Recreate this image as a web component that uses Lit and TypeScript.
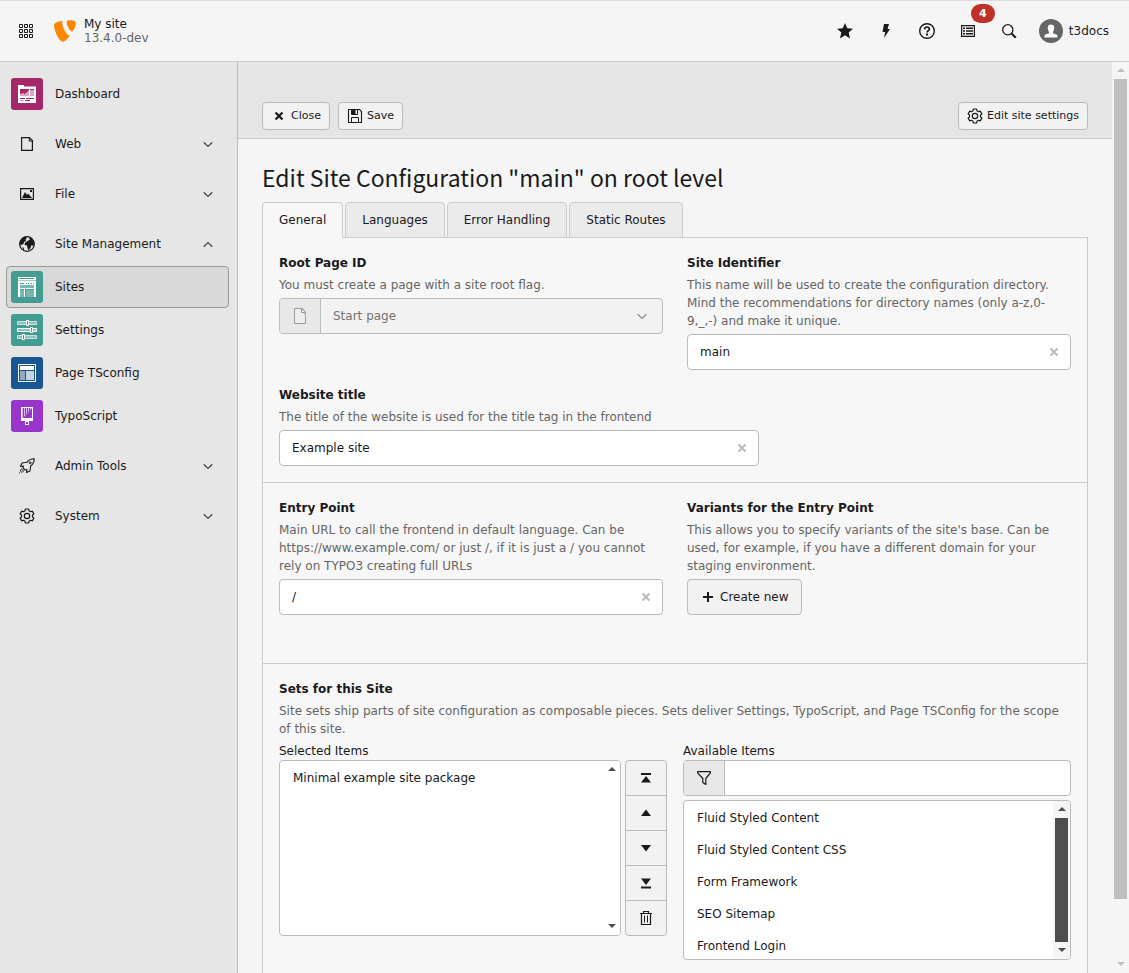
import { LitElement, html, css, svg, nothing, SVGTemplateResult } from "lit";
import { customElement, property, state } from "lit/decorators.js";
import { classMap } from "lit/directives/class-map.js";

/** Outline of a cog with six teeth, centred in a 16 unit box. */
function cogOutline(): string {
  const points: string[] = [];
  for (let tooth = 0; tooth < 6; tooth++) {
    const centre = tooth * 60 - 90;
    for (const [offset, radius] of [[-20, 5.6], [-13, 7.2], [13, 7.2], [20, 5.6]]) {
      const angle = ((centre + offset) * Math.PI) / 180;
      points.push(`${(8 + radius * Math.cos(angle)).toFixed(2)} ${(8 + radius * Math.sin(angle)).toFixed(2)}`);
    }
  }
  return `M${points.join("L")}Z`;
}

const ICONS: Record<string, SVGTemplateResult> = {
  apps: svg`<path fill="none" stroke="currentColor" d="M1.5 1.5h3v3h-3zM6.5 1.5h3v3h-3zM11.5 1.5h3v3h-3zM1.5 6.5h3v3h-3zM6.5 6.5h3v3h-3zM11.5 6.5h3v3h-3zM1.5 11.5h3v3h-3zM6.5 11.5h3v3h-3zM11.5 11.5h3v3h-3z"/>`,
  logo: svg`<path fill="#ff8700" d="M11.6 11c-.3.1-.5.1-.8.1-2 0-4.900-6.900-4.900-9.200 0-.8.2-1.100.5-1.400C4 .8 1.200 1.600.3 2.700.1 3 0 3.500 0 4c0 3.600 3.800 11.800 6.500 11.800 1.300 0 3.300-2.100 5.100-4.800M10.600.200c2.700 0 5.300.4 5.300 1.800 0 2.800-1.900 6.300-2.900 6.300-1.700 0-3.800-4.600-3.800-7 0-1 .4-1.100 1.400-1.100"/>`,
  star: svg`<path fill="currentColor" d="M8 0l2.300 5.300 5.700.5-4.300 3.800 1.300 5.900-5-3.200-5 3.200 1.300-5.900L0 5.800l5.700-.5z"/>`,
  bolt: svg`<path fill="currentColor" d="M6 1h5L9.500 6H12L6 15l1.200-6H4.500z"/>`,
  help: svg`<circle cx="8" cy="8" r="7.300" fill="none" stroke="currentColor" stroke-width="1.400"/><path fill="none" stroke="currentColor" stroke-width="1.700" d="M5.700 6.300c0-3 4.700-3 4.700-.2C10.400 7.800 8 7.700 8 9.600"/><path fill="currentColor" d="M7 10.500h2v2H7z"/>`,
  list: svg`<path fill="none" stroke="currentColor" stroke-width="1.200" d="M1.600 2.600h12.800v10.800H1.600z"/><path fill="currentColor" d="M3 4.500h2V6H3zM6 4.500h7V6H6zM3 7.200h2v1.500H3zM6 7.200h7v1.500H6zM3 10h2v1.500H3zM6 10h7v1.500H6z"/>`,
  search: svg`<circle cx="6.800" cy="6.800" r="5.100" fill="none" stroke="currentColor" stroke-width="1.300"/><path stroke="currentColor" stroke-width="2" d="M10.500 10.500l4.300 4.300"/>`,
  page: svg`<path fill="none" stroke="currentColor" stroke-width="1.200" d="M2.600 1.600h7.800l3 3v9.800H2.600z"/><path fill="currentColor" d="M9.800 1.500h1V4.500h3v1h-4z"/>`,
  pageTree: svg`<path fill="#eee" stroke="#999" d="M2.500.500h8l3 4v11h-11z"/><path fill="#ccc" d="M9.500.500v4h4V10z"/><path fill="#fff" stroke="#999" d="M9.500.500v4h4z"/>`,
  image: svg`<path fill="none" stroke="currentColor" stroke-width="1.200" d="M1.600 2.600h12.800v10.800H1.600z"/><path fill="currentColor" d="M3 12l3-6 2 3 1-1.500L13 12zM11 4h2v2h-2z"/>`,
  globe: svg`<circle cx="8" cy="8" r="7.300" fill="none" stroke="currentColor" stroke-width="1.300"/><path fill="currentColor" d="M1 5.500C2 3 4 1.300 6.500.800L8 2 6.500 3.500 7 5 5 6 4.500 8 2 9 .800 8zM8.500 5L11 3.500 10 2.500l1-1C14 3 15 5 15.200 8L14 10l-1.500-1-1 3-2 2.500L8.500 12 8 9.500 5.500 9 6 6.800zM3 11l2 1v2.500z"/>`,
  rocket: svg`<path fill="none" stroke="currentColor" stroke-width="1.100" stroke-linejoin="round" d="M15.200.800c-3 0-5.500 1.200-7.200 3.500L3 5 1.500 8.500l3-.5L4 10l2 2 2-.5-.5 3L11 13l.700-5c2.300-1.700 3.500-4.200 3.500-7.200z"/><circle cx="11.200" cy="4.800" r="1" fill="none" stroke="currentColor"/><path fill="currentColor" d="M2 10.500h1v1H2zM3 11.500h1v1H3zM1 12.500h1v1H1zM2 13.500h1v1H2zM4 12.500h1v1H4zM0 14.500h1v1H0zM3 13.500h.8v1H3zM1 11.500h.8v1H1z"/>`,
  cog: svg`<path fill="none" stroke="currentColor" stroke-width="1.200" stroke-linejoin="round" d="${cogOutline()}"/><circle cx="8" cy="8" r="2.700" fill="none" stroke="currentColor" stroke-width="1.200"/>`,
  down: svg`<path fill="none" stroke="currentColor" stroke-width="1.200" d="M3.700 6.300L8 10.500l4.300-4.200"/>`,
  up: svg`<path fill="none" stroke="currentColor" stroke-width="1.200" d="M3.700 10.700L8 6.500l4.300 4.200"/>`,
  close: svg`<path stroke="currentColor" stroke-width="2.200" d="M4.500 4.500l7 7M11.500 4.500l-7 7"/>`,
  save: svg`<path fill="none" stroke="currentColor" stroke-width="1.100" d="M1.500 1.500h11l2 2v11h-13z"/><path fill="none" stroke="currentColor" d="M4.500 14V9.500h7V14M4.500 2v4.500h6V2"/><path fill="currentColor" d="M4.500 2h4v4h-4z"/>`,
  plus: svg`<path stroke="currentColor" stroke-width="2" d="M8 3v10M3 8h10"/>`,
  toTop: svg`<path fill="currentColor" d="M3 3h10v2H3zM8 6l5 6.500H3z"/>`,
  moveUp: svg`<path fill="currentColor" d="M8 4.500l5 6.500H3z"/>`,
  moveDown: svg`<path fill="currentColor" d="M8 11.500L3 5h10z"/>`,
  toBottom: svg`<path fill="currentColor" d="M3 11.500h10v2H3zM8 10L3 3.500h10z"/>`,
  trash: svg`<path fill="none" stroke="currentColor" stroke-width="1.200" d="M2 3.500h12M5.500 3.500v-2h5v2M3.500 3.500v11h9v-11"/><path stroke="currentColor" d="M6.500 5.500v7M9.500 5.500v7"/>`,
  filter: svg`<path fill="none" stroke="currentColor" stroke-width="1.200" stroke-linejoin="round" d="M1.600 1.600h12.800v1.200L9.800 8.500v6l-3-2V8.500L1.600 2.800z"/>`,
};

/* Module pictograms on a 32 unit tile. */
const TILES: Record<string, { color: string; art: SVGTemplateResult }> = {
  dashboard: {
    color: "#a4276a",
    art: svg`<path fill="#fff" d="M7 7h6v1.500h12V25H7z"/><path fill="#a4276a" d="M14 7h5v1h-5zM20 7h5v1h-5z" opacity=".5"/><path fill="#a4276a" d="M9 11h9v4l-2 1.500H9zM19 11h4v1h-4zM9 20h5v1H9zM15 20h8v1h-8zM14 22h5v1h-5z"/><path fill="#dba8c4" d="M9 16l3-1 2 1 4-4v6H9zM19 12h4v6h-4zM9 22h4v1H9z"/>`,
  },
  sites: {
    color: "#449d92",
    art: svg`<path fill="#fff" d="M7 6h18v20H7z"/><path fill="#a1cec8" d="M7 9h18v1H7z"/><path fill="#449d92" d="M8 7h15v1H8zM9 12h4v1H9zM15 12h1v1h-1zM17 12h1v1h-1zM20 12h1v1h-1zM22 12h1v1h-1zM9 14h14v12H9z"/><path fill="#78b8b0" d="M9 14h14v3H9zM9 19h4v7H9zM15 19h8v7h-8z"/><path fill="#fff" d="M9 17h14v1H9zM13 18h1v8h-1z"/>`,
  },
  settings: {
    color: "#449d92",
    art: svg`<path fill="#8fc4be" stroke="#c7e1de" d="M6.500 7.500h19v3h-19zM6.500 21.500h19v3h-19z"/><path fill="#8fc4be" stroke="#fff" d="M6.500 14.500h19v3h-19z"/><path fill="#449d92" stroke="#fff" d="M15.500 6.500h2v5h-2zM19.500 13.500h2v5h-2zM11.500 20.500h2v5h-2z"/>`,
  },
  tsconfig: {
    color: "#1a568f",
    art: svg`<path fill="none" stroke="#fff" d="M7.500 7.500h17v17h-17z"/><path fill="#fff" d="M9 9h14v4H9z"/><path fill="#8ca9c6" d="M9 14h5v9H9z"/><path fill="#c6d4e3" d="M15 14h8v9h-8z"/>`,
  },
  typoscript: {
    color: "#9a35cc",
    art: svg`<path fill="#fff" d="M10 7h12v14h-4v4h-4v-4h-4z"/><path fill="#9a35cc" d="M11 8h10v10H11z"/><path fill="#d9b3ec" d="M11 8h10L12 18h-1z"/><path fill="#9a35cc" d="M12 8h1v9h-1zM14 8h1v7h-1zM16 8h1v5h-1zM18 8h1v3h-1zM15 22h2v2h-2z"/>`,
  },
};

@customElement("t3-icon")
export class T3Icon extends LitElement {
  @property() name = "";

  static styles = css`
    :host { display: inline-flex; flex: none; width: 16px; height: 16px; }
    svg { width: 100%; height: 100%; display: block; overflow: visible; }
  `;

  render() {
    return html`<svg viewBox="0 0 16 16" aria-hidden="true">${ICONS[this.name] ?? nothing}</svg>`;
  }
}

@customElement("t3-tile")
export class T3Tile extends LitElement {
  @property() name = "";

  static styles = css`
    :host { display: block; flex: none; width: 32px; height: 32px; }
    svg { width: 100%; height: 100%; display: block; }
  `;

  render() {
    const tile = TILES[this.name];
    return html`<svg viewBox="0 0 32 32" aria-hidden="true"><rect width="32" height="32" rx="3" fill="${tile.color}"></rect>${tile.art}</svg>`;
  }
}

@customElement("t3-scrollbar")
export class T3Scrollbar extends LitElement {
  static styles = css`
    :host { display: flex; flex-direction: column; align-items: center; flex: none; box-sizing: border-box; width: 17px; color: #bfbfbf; background: #f5f5f5; }
    .arrow { width: 8px; height: 17px; flex: none; }
    .track { flex: 1; display: flex; flex-direction: column; width: 13px; }
    .thumb { background: currentColor; flex: var(--thumb, 1); }
    .rest { flex: var(--rest, 0); }
  `;

  render() {
    return html`
      <svg class="arrow" viewBox="0 0 8 17"><path fill="currentColor" d="M4 6l4 4H0z"/></svg>
      <div class="track"><div class="thumb"></div><div class="rest"></div></div>
      <svg class="arrow" viewBox="0 0 8 17"><path fill="currentColor" d="M4 10L0 6h8z"/></svg>
    `;
  }
}

interface MenuEntry {
  label: string;
  icon?: string;
  tile?: string;
  open?: boolean;
  children?: MenuEntry[];
}

const MENU: MenuEntry[] = [
  { label: "Dashboard", tile: "dashboard" },
  { label: "Web", icon: "page", open: false },
  { label: "File", icon: "image", open: false },
  {
    label: "Site Management",
    icon: "globe",
    open: true,
    children: [
      { label: "Sites", tile: "sites" },
      { label: "Settings", tile: "settings" },
      { label: "Page TSconfig", tile: "tsconfig" },
      { label: "TypoScript", tile: "typoscript" },
    ],
  },
  { label: "Admin Tools", icon: "rocket", open: false },
  { label: "System", icon: "cog", open: false },
];

const base = css`
  *, *::before, *::after { box-sizing: border-box; }
  button, input, select { font: inherit; color: inherit; margin: 0; }
  button { cursor: pointer; }
`;

@customElement("t3-menu")
export class T3Menu extends LitElement {
  @state() active = "Sites";

  static styles = [base, css`
    :host { display: block; box-sizing: border-box; flex: none; width: 238px; padding: 11px 8px 11px 6px; background: #e6e6e6; border-right: 1px solid #bababa; }
    .groups { display: grid; gap: 8px; }
    .group { display: grid; gap: 1px; }
    .item { display: flex; align-items: center; gap: 12px; width: 100%; height: 42px; padding: 0 12px 0 4px; border: 1px solid transparent; border-radius: 4px; background: none; text-align: left; }
    .item.active { background: #d9d9d9; border-color: #999; }
    .slot { display: flex; justify-content: center; width: 32px; }
    .label { flex: 1; }
    .chevron { color: #444; }
  `];

  private entry(item: MenuEntry) {
    return html`
      <button class=${classMap({ item: true, active: item.label === this.active })} @click=${() => { if (item.tile) this.active = item.label; }}>
        <span class="slot">${item.tile ? html`<t3-tile name=${item.tile}></t3-tile>` : html`<t3-icon name=${item.icon}></t3-icon>`}</span>
        <span class="label">${item.label}</span>
        ${item.open === undefined ? nothing : html`<t3-icon class="chevron" name=${item.open ? "up" : "down"}></t3-icon>`}
      </button>`;
  }

  render() {
    return html`<nav class="groups">
      ${MENU.map((item) => html`<div class="group">${this.entry(item)}${(item.children ?? []).map((child) => this.entry(child))}</div>`)}
    </nav>`;
  }
}

@customElement("t3-topbar")
export class T3Topbar extends LitElement {
  static styles = [base, css`
    :host { display: flex; box-sizing: border-box; flex: none; align-items: center; height: 62px; padding: 0 20px 0 18px; background: #f5f5f5; border-top: 1px solid #ddd; border-bottom: 1px solid #ccc; }
    .plain { display: flex; align-items: center; padding: 0; border: 0; background: none; }
    .brand { display: flex; align-items: center; gap: 8px; margin-left: 20px; color: inherit; text-decoration: none; line-height: 14px; }
    .logo { width: 22px; height: 22px; }
    .version { color: #666; }
    .tools { display: flex; align-items: center; gap: 25px; margin-left: auto; }
    .tool { position: relative; }
    .badge { position: absolute; left: 11px; bottom: 16px; display: grid; place-items: center; width: 24px; height: 19px; border-radius: 10px; background: #bf3026; color: #fff; font-size: 11px; font-weight: 700; }
    .user { gap: 6px; margin-left: 22px; }
    .avatar { width: 24px; height: 24px; }
    .site { display: grid; }
  `];

  render() {
    return html`
      <button class="plain" aria-label="Toggle menu"><t3-icon name="apps"></t3-icon></button>
      <a class="brand" href="#">
        <t3-icon class="logo" name="logo"></t3-icon>
        <span class="site"><span>My site</span><span class="version">13.4.0-dev</span></span>
      </a>
      <div class="tools">
        <button class="plain tool" aria-label="Bookmarks"><t3-icon name="star"></t3-icon></button>
        <button class="plain tool" aria-label="Clear cache"><t3-icon name="bolt"></t3-icon></button>
        <button class="plain tool" aria-label="Help"><t3-icon name="help"></t3-icon></button>
        <button class="plain tool" aria-label="System information"><t3-icon name="list"></t3-icon><span class="badge">4</span></button>
        <button class="plain tool" aria-label="Search"><t3-icon name="search"></t3-icon></button>
      </div>
      <button class="plain user">
        <svg class="avatar" viewBox="0 0 24 24" aria-hidden="true"><circle cx="12" cy="12" r="12" fill="#666"/><path fill="#fff" d="M12 5.500c4 0 3.800 4.500 2 7.500v1.300l3.500 1.200c1 .4 1 1 1 3h-13c0-2 0-2.600 1-3L10 14.300V13c-1.800-3-2-7.500 2-7.500z"/></svg>
        <span>t3docs</span>
      </button>`;
  }
}

@customElement("t3-field")
export class T3Field extends LitElement {
  @property() label = "";
  @property() hint = "";
  @property() value = "";

  static styles = [base, css`
    :host { display: block; max-width: 480px; }
    .label { display: block; font-weight: 700; margin-bottom: 4px; }
    .hint { margin: 0 0 4px; color: #666; }
    .box { position: relative; }
    .input { display: block; width: 100%; height: 36px; padding: 0 36px 0 12px; border: 1px solid #bbb; border-radius: 4px; background: #fff; }
    .clear { position: absolute; right: 9px; top: 10px; display: flex; padding: 0; border: 0; background: none; color: #bbb; }
  `];

  render() {
    return html`
      <label class="label" for="field">${this.label}</label>
      <p class="hint" id="hint">${this.hint}</p>
      <div class="box">
        <input class="input" id="field" type="text" aria-describedby="hint" .value=${this.value} @input=${(e: InputEvent) => { this.value = (e.target as HTMLInputElement).value; }}>
        <button class="clear" aria-label="Clear input" @click=${() => { this.value = ""; }}><t3-icon name="close"></t3-icon></button>
      </div>`;
  }
}

@customElement("app-root")
export class AppRoot extends LitElement {
  @state() tab = "General";

  static styles = [base, css`
    :host { display: flex; flex-direction: column; height: 100vh; overflow: hidden; background: #f5f5f5; color: #1a1a1a; font: 12px/18px "DejaVu Sans", Verdana, sans-serif; }
    .body { flex: 1; display: flex; min-height: 0; }
    .main { flex: 1; min-width: 0; overflow-y: auto; scrollbar-width: none; }
    .page-scroll { --thumb: 820; --rest: 57; }

    .docheader { display: flex; gap: 8px; padding: 40px 24px 8px; background: #e6e6e6; border-bottom: 1px solid #ccc; }
    .btn { display: inline-flex; align-items: center; gap: 4px; height: 28px; padding: 0 8px; border: 1px solid #bbb; border-radius: 4px; background: #f2f2f2; font-size: 11px; }
    .btn.end { margin-left: auto; }
    .btn.large { height: 36px; padding: 0 12px; font-size: 12px; }

    .content { padding: 23px 24px 48px; }
    .title { margin: 0 0 10px; font: 400 23px/30px "Noto Sans CJK SC", "Noto Sans", sans-serif; }
    .tabs { display: flex; gap: 2px; position: relative; z-index: 1; }
    .tab { height: 36px; padding: 0 16px; border: 1px solid #ccc; border-radius: 4px 4px 0 0; background: #ebebeb; }
    .tab.active { background: #f7f7f7; border-bottom-color: #f7f7f7; }
    .panel { margin-top: -1px; border: 1px solid #ccc; background: #f7f7f7; }

    .section { padding: 16px; }
    .section + .section { border-top: 1px solid #ccc; }
    .section.roomy { padding-bottom: 48px; }
    .grid { display: grid; grid-template-columns: 1fr 1fr; gap: 16px 24px; }
    .wide { grid-column: 1 / -1; }
    .label { display: block; font-weight: 700; margin-bottom: 4px; }
    .hint { margin: 0 0 4px; color: #666; }

    .group { display: flex; height: 36px; border: 1px solid #bbb; border-radius: 4px; overflow: hidden; background: #fff; }
    .group.disabled { background: #f2f2f2; color: #737373; }
    .addon { display: grid; place-items: center; width: 41px; flex: none; background: #e8e8e8; border-right: 1px solid #bbb; }
    .select-box { flex: 1; display: grid; align-items: center; }
    .select, .caret { grid-area: 1 / 1; }
    .select { width: 100%; height: 34px; padding: 0 36px 0 12px; border: 0; background: none; appearance: none; opacity: 1; color: inherit; }
    .caret { justify-self: end; margin-right: 12px; color: #888; pointer-events: none; }
    .search { flex: 1; min-width: 0; padding: 0 12px; border: 0; background: none; }

    .list-label { display: block; }
    .sets { display: grid; grid-template-columns: 1fr 1fr; gap: 16px; }
    .picked { display: flex; gap: 4px; }
    .list { display: flex; border: 1px solid #bbb; border-radius: 4px; overflow: hidden; background: #fff; }
    .list.selected { flex: 1; height: 176px; }
    .list.available { height: 160px; margin-top: 4px; }
    .options { flex: 1; min-width: 0; height: 100%; padding: 0; border: 0; outline: 0; background: none; overflow-y: auto; scrollbar-width: none; }
    .option { display: block; height: 32px; min-height: 32px; padding: 10px 13px 8px; }
    .dark { color: #4d4d4d; }
    .empty { background: #fff; --thumb: 0; --rest: 1; }
    .moves { display: flex; flex-direction: column; width: 42px; }
    .move { display: grid; place-items: center; height: 36px; padding: 0; border: 1px solid #bbb; background: #f2f2f2; }
    .move + .move { margin-top: -1px; }
    .move:first-child { border-radius: 4px 4px 0 0; }
    .move:last-child { border-radius: 0 0 4px 4px; }
  `];

  private renderGeneral() {
    return html`
      <section class="section grid">
        <div>
          <label class="label" for="root-page">Root Page ID</label>
          <p class="hint">You must create a page with a site root flag.</p>
          <div class="group disabled">
            <span class="addon"><t3-icon name="pageTree"></t3-icon></span>
            <div class="select-box">
              <select class="select" id="root-page" disabled><option>Start page</option></select>
              <t3-icon class="caret" name="down"></t3-icon>
            </div>
          </div>
        </div>
        <t3-field label="Site Identifier" value="main"
          hint="This name will be used to create the configuration directory. Mind the recommendations for directory names (only a-z,0-9,_,-) and make it unique."></t3-field>
        <t3-field class="wide" label="Website title" value="Example site"
          hint="The title of the website is used for the title tag in the frontend"></t3-field>
      </section>
      <section class="section roomy grid">
        <t3-field label="Entry Point" value="/"
          hint="Main URL to call the frontend in default language. Can be https://www.example.com/ or just /, if it is just a / you cannot rely on TYPO3 creating full URLs"></t3-field>
        <div>
          <span class="label">Variants for the Entry Point</span>
          <p class="hint">This allows you to specify variants of the site's base. Can be used, for example, if you have a different domain for your staging environment.</p>
          <button class="btn large"><t3-icon name="plus"></t3-icon>Create new</button>
        </div>
      </section>
      <section class="section">
        <span class="label">Sets for this Site</span>
        <p class="hint">Site sets ship parts of site configuration as composable pieces. Sets deliver Settings, TypoScript, and Page TSConfig for the scope of this site.</p>
        <div class="sets">
          <div>
            <label class="list-label" for="selected">Selected Items</label>
            <div class="picked">
              <div class="list selected">
                <select class="options" id="selected" multiple size="5"><option class="option">Minimal example site package</option></select>
                <t3-scrollbar class="dark empty"></t3-scrollbar>
              </div>
              <div class="moves">
                <button class="move" aria-label="Move to top"><t3-icon name="toTop"></t3-icon></button>
                <button class="move" aria-label="Move up"><t3-icon name="moveUp"></t3-icon></button>
                <button class="move" aria-label="Move down"><t3-icon name="moveDown"></t3-icon></button>
                <button class="move" aria-label="Move to bottom"><t3-icon name="toBottom"></t3-icon></button>
                <button class="move" aria-label="Remove"><t3-icon name="trash"></t3-icon></button>
              </div>
            </div>
          </div>
          <div>
            <label class="list-label" for="available">Available Items</label>
            <div class="group">
              <span class="addon"><t3-icon name="filter"></t3-icon></span>
              <input class="search" type="text" aria-label="Filter available items">
            </div>
            <div class="list available">
              <select class="options" id="available" multiple size="5">
                ${["Fluid Styled Content", "Fluid Styled Content CSS", "Form Framework", "SEO Sitemap", "Frontend Login"].map((name) => html`<option class="option">${name}</option>`)}
              </select>
              <t3-scrollbar class="dark"></t3-scrollbar>
            </div>
          </div>
        </div>
      </section>`;
  }

  render() {
    return html`
      <t3-topbar></t3-topbar>
      <div class="body">
        <t3-menu></t3-menu>
        <main class="main">
          <div class="docheader">
            <button class="btn"><t3-icon name="close"></t3-icon>Close</button>
            <button class="btn"><t3-icon name="save"></t3-icon>Save</button>
            <button class="btn end"><t3-icon name="cog"></t3-icon>Edit site settings</button>
          </div>
          <div class="content">
            <h1 class="title">Edit Site Configuration "main" on root level</h1>
            <div class="tabs" role="tablist">
              ${["General", "Languages", "Error Handling", "Static Routes"].map((name) => html`
                <button role="tab" aria-selected=${name === this.tab ? "true" : "false"} class=${classMap({ tab: true, active: name === this.tab })} @click=${() => { this.tab = name; }}>${name}</button>`)}
            </div>
            <div class="panel" role="tabpanel">${this.tab === "General" ? this.renderGeneral() : nothing}</div>
          </div>
        </main>
        <t3-scrollbar class="page-scroll"></t3-scrollbar>
      </div>`;
  }
}
